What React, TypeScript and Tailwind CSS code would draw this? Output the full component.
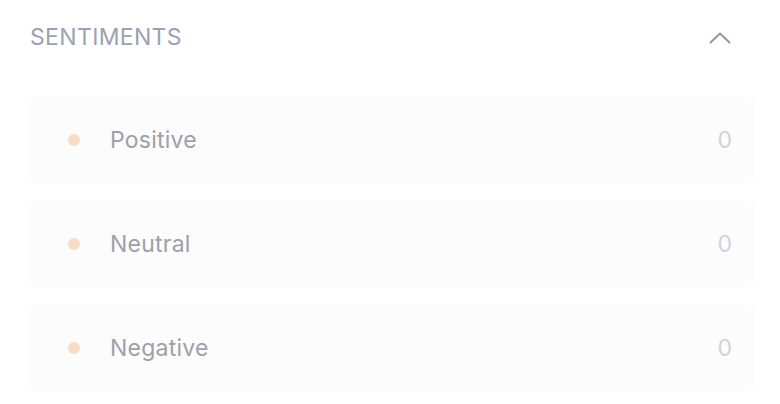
import React from "react";

const sentiments = [
  { label: "Positive", count: 0 },
  { label: "Neutral", count: 0 },
  { label: "Negative", count: 0 },
];

function ChevronUp() {
  return (
    <svg width="22" height="12" viewBox="0 0 22 12" fill="none">
      <path
        d="M1.5 10.5L11 1.5L20.5 10.5"
        stroke="#8f97a8"
        strokeWidth="2"
        strokeLinecap="round"
        strokeLinejoin="round"
      />
    </svg>
  );
}

export default function App() {
  return (
    <div
      className="w-[780px] h-[404px] bg-white pl-[30px] pr-[25px]"
      style={{ fontFamily: "Inter, 'Noto Sans', sans-serif" }}
    >
      <div className="flex items-center justify-between h-[75px]">
        <h2 className="text-[23px] leading-none text-[#9aa2b3] tracking-[0.015em]">
          SENTIMENTS
        </h2>
        <button className="mr-[24px] flex items-center">
          <ChevronUp />
        </button>
      </div>
      <div className="mt-[21px] flex flex-col gap-[16px]">
        {sentiments.map((s) => (
          <div
            key={s.label}
            className="h-[88px] rounded-lg bg-[#fcfcfc] flex items-center pl-[38px] pr-[23px]"
          >
            <span className="w-[12px] h-[12px] rounded-full bg-[#f8dcc3]" />
            <span className="ml-[30px] text-[23px] leading-none text-[#9ca0ab] tracking-[0.01em]">
              {s.label}
            </span>
            <span className="ml-auto text-[23px] leading-none text-[#d0d3da]">
              {s.count}
            </span>
          </div>
        ))}
      </div>
    </div>
  );
}
